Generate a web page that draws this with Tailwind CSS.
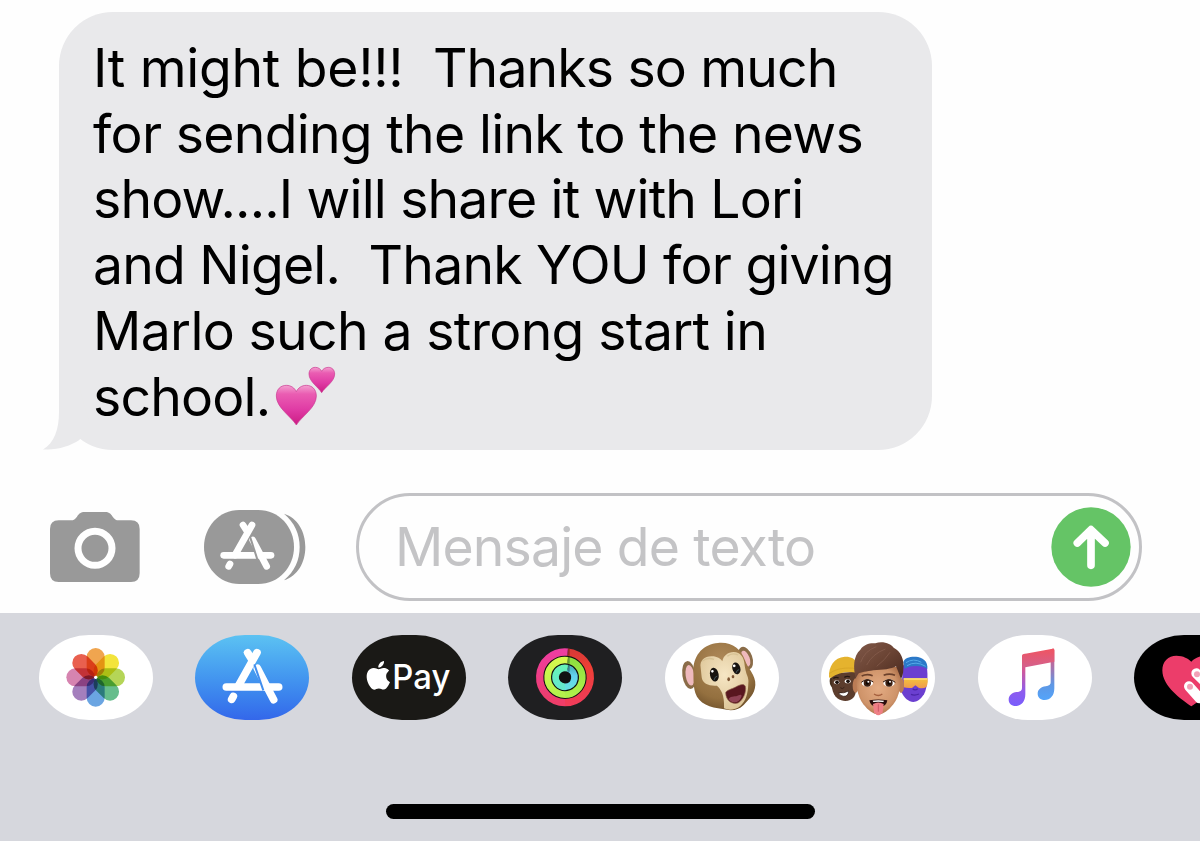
<!DOCTYPE html>
<html lang="es">
<head>
    <meta charset="UTF-8">
    <meta name="viewport" content="width=device-width, initial-scale=1.0">
    <title>Mensajes</title>

    <!-- Tailwind CSS for styling -->
    <script src="https://cdn.jsdelivr.net/npm/@tailwindcss/browser@4"></script>
</head>
<body class="bg-[#fefefe] w-[1200px] h-[841px] overflow-hidden flex flex-col font-['Inter',sans-serif]">

    <!-- Conversation -->
    <main class="h-[493px] shrink-0 pt-[12px] pl-[59px]">
        <div class="relative w-[873px] h-[438px] bg-[#e9e9eb] rounded-[54px] pt-[23px] pl-[34px]">
            <!-- Bubble tail -->
            <svg class="absolute -left-[17px] bottom-0 w-[60px] h-[60px]" viewBox="42 390 60 60" fill="#e9e9eb">
                <path d="M59 390V412C59 430 54 443 43 449.4C57 450.5 70 446 79.3 440L90 425L80 390Z"/>
            </svg>
            <div class="text-[53.5px] leading-[65.7px] text-black">
                <p class="whitespace-pre tracking-[-0.85px]"><span class="tracking-[-0.3px]">It might be!!!  </span>Thanks so much</p>
                <p class="whitespace-pre tracking-[-0.7px]">for sending the link to the news</p>
                <p class="whitespace-pre tracking-[-0.83px]">show....I will share it with Lori</p>
                <p class="whitespace-pre tracking-[-0.8px]">and Nigel.  Thank YOU for giving</p>
                <p class="whitespace-pre tracking-[-0.65px]">Marlo such a strong start in</p>
                <p class="whitespace-pre tracking-[-0.8px] flex">school.<svg class="w-[62px] h-[66px] -mt-[2px] ml-[5px]" viewBox="735 35 186 198" role="img" aria-label="💕">
                    <defs>
                        <linearGradient id="heart" x1="0" y1="0" x2="0" y2="1">
                            <stop offset="0" stop-color="#f3a0d0"/>
                            <stop offset=".22" stop-color="#ea5db2"/>
                            <stop offset=".6" stop-color="#e03ca5"/>
                            <stop offset="1" stop-color="#cc1c84"/>
                        </linearGradient>
                    </defs>
                    <g fill="url(#heart)" stroke="#c8388f" stroke-width="2">
                        <path d="M799 224C783 198 739 172 739 137C739 117 752 105 769 105C783 105 794 113 799 124C804 113 815 105 829 105C846 105 859 117 859 137C859 172 815 198 799 224Z"/>
                        <path d="M875 127C865 110 837 94 837 71C837 59 845 51 856 51C865 51 872 56 875 63C878 56 886 51 895 51C906 51 914 59 914 71C914 94 885 110 875 127Z"/>
                    </g>
                </svg></p>
            </div>
        </div>
    </main>

    <!-- Composer -->
    <section class="h-[120px] shrink-0 flex items-start pl-[50px]">
        <!-- Camera -->
        <svg class="w-[90px] h-[70px] mt-[19px]" viewBox="61 66 270 210">
            <path fill="#999" d="M87 91H124C132 91 137 87 142 80C148 71 153 66 165 66H226C238 66 243 71 249 80C254 87 259 91 267 91H304Q330 91 330 117V250Q330 276 304 276H87Q61 276 61 250V117Q61 91 87 91Z"/>
            <circle cx="196" cy="175" r="51" fill="none" stroke="#fff" stroke-width="21"/>
        </svg>
        <!-- App drawer -->
        <svg class="w-[102px] h-[74px] mt-[17px] ml-[64px]" viewBox="522 60 306 222">
            <path fill="#999" d="M762 71C803 84 826 124 826 171C826 218 803 258 762 271C794 244 809 210 809 171C809 132 794 98 762 71Z"/>
            <path fill="#999" d="M628 60H684C748 60 792 112 792 171C792 230 748 282 684 282H628C566 282 522 230 522 171C522 112 566 60 628 60Z"/>
            <g stroke="#fff" stroke-width="20" stroke-linecap="round" fill="none">
                <path d="M666 105L615 195"/>
                <path d="M639 105L652 125"/>
                <path d="M668 150L710 229"/>
                <path d="M581 196H723"/>
                <path d="M600 222L596 229"/>
            </g>
            <path d="M660 140L682 208" stroke="#999" stroke-width="6"/>
        </svg>
        <!-- Text field -->
        <div class="ml-[50px] w-[786px] h-[108px] border-[3px] border-[#c2c2c5] rounded-full flex items-center justify-between pl-[36px] pr-[8px]">
            <span class="text-[53.5px] tracking-[-0.85px] text-[#c4c4c6] whitespace-nowrap">Mensaje de texto</span>
            <svg class="w-[80px] h-[80px]" viewBox="152 81 240 240">
                <circle cx="272" cy="201" r="119" fill="#65c466"/>
                <path d="M272 256V150M231 189L272 149L314 189" fill="none" stroke="#fff" stroke-width="23" stroke-linecap="round" stroke-linejoin="round"/>
            </svg>
        </div>
    </section>

    <!-- App strip -->
    <footer class="flex-1 bg-[#d6d7dd] flex flex-col pt-[22px]">
        <div class="flex gap-[42.45px] pl-[39px]">

            <!-- Photos -->
            <div class="shrink-0 w-[114px] h-[85px] rounded-[50px/42.5px] overflow-hidden bg-white">
                <svg class="w-full h-full isolate" viewBox="27 30 342 255">
                    <g transform="translate(197 157)">
                        <rect class="mix-blend-multiply" x="-27" y="-88" width="54" height="86" rx="27" fill="#f0a54f"/>
                        <rect class="mix-blend-multiply" x="-27" y="-88" width="54" height="86" rx="27" fill="#f3e43c" transform="rotate(45)"/>
                        <rect class="mix-blend-multiply" x="-27" y="-88" width="54" height="86" rx="27" fill="#b5d557" transform="rotate(90)"/>
                        <rect class="mix-blend-multiply" x="-27" y="-88" width="54" height="86" rx="27" fill="#66bd8c" transform="rotate(135)"/>
                        <rect class="mix-blend-multiply" x="-27" y="-88" width="54" height="86" rx="27" fill="#6ba5e2" transform="rotate(180)"/>
                        <rect class="mix-blend-multiply" x="-27" y="-88" width="54" height="86" rx="27" fill="#a47fbd" transform="rotate(225)"/>
                        <rect class="mix-blend-multiply" x="-27" y="-88" width="54" height="86" rx="27" fill="#d684b0" transform="rotate(270)"/>
                        <rect class="mix-blend-multiply" x="-27" y="-88" width="54" height="86" rx="27" fill="#e9604f" transform="rotate(315)"/>
                        <circle r="5" fill="#fff"/>
                    </g>
                </svg>
            </div>

            <!-- App Store -->
            <div class="shrink-0 w-[114px] h-[85px] rounded-[50px/42.5px] overflow-hidden bg-linear-to-b from-[#5cc2f2] to-[#3467ea]">
                <svg class="w-full h-full" viewBox="30 30 342 255">
                    <g stroke="#fff" stroke-width="23" stroke-linecap="round" fill="none">
                        <path d="M216 83L161 181"/>
                        <path d="M188 83L200 103"/>
                        <path d="M217 130L266 224"/>
                        <path d="M124 186H281"/>
                        <path d="M145 214L140 223"/>
                    </g>
                    <path d="M208 118L235 196" stroke="#428eee" stroke-width="6"/>
                    <path d="M128 200H166" stroke="#3f7eec" stroke-width="4"/>
                </svg>
            </div>

            <!-- Apple Pay -->
            <div class="shrink-0 w-[114px] h-[85px] rounded-[50px/42.5px] overflow-hidden bg-[#1a1916]">
                <svg class="w-full h-full" viewBox="36 30 342 255" fill="#fff">
                    <path transform="translate(72 108) scale(3.58)" d="M12.152 6.896c-.948 0-2.415-1.078-3.96-1.04-2.04.027-3.91 1.183-4.961 3.014-2.117 3.675-.546 9.103 1.519 12.09 1.013 1.454 2.208 3.09 3.792 3.039 1.52-.065 2.09-.987 3.935-.987 1.831 0 2.35.987 3.96.948 1.637-.026 2.676-1.48 3.676-2.948 1.156-1.688 1.636-3.325 1.662-3.415-.039-.013-3.182-1.221-3.22-4.857-.026-3.04 2.48-4.494 2.597-4.559-1.429-2.09-3.623-2.324-4.39-2.376-2-.156-3.675 1.09-4.61 1.09zM15.53 3.83c.843-1.012 1.4-2.427 1.245-3.83-1.207.052-2.662.805-3.532 1.818-.78.896-1.454 2.338-1.273 3.714 1.338.104 2.715-.688 3.559-1.701"/>
                    <text x="157" y="192" font-size="104" font-weight="500" textLength="174" lengthAdjust="spacingAndGlyphs">Pay</text>
                </svg>
            </div>

            <!-- Activity -->
            <div class="shrink-0 w-[114px] h-[85px] rounded-[50px/42.5px] overflow-hidden bg-[#1f1f21]">
                <svg class="w-full h-full" viewBox="24 30 342 255" fill="none">
                    <defs>
                        <linearGradient id="moveR" x1="0" y1="0" x2="0" y2="1"><stop offset="0" stop-color="#d93a36"/><stop offset=".3" stop-color="#ee3f35"/><stop offset="1" stop-color="#f03c58"/></linearGradient>
                        <linearGradient id="moveL" x1="0" y1="0" x2="0" y2="1"><stop offset="0" stop-color="#ee3ea0"/><stop offset="1" stop-color="#ee3d68"/></linearGradient>
                        <linearGradient id="exR" x1="0" y1="0" x2="0" y2="1"><stop offset="0" stop-color="#8fe040"/><stop offset="1" stop-color="#aef04a"/></linearGradient>
                        <linearGradient id="exL" x1="0" y1="0" x2="0" y2="1"><stop offset="0" stop-color="#d6fa4e"/><stop offset="1" stop-color="#b4f24c"/></linearGradient>
                        <linearGradient id="stR" x1="0" y1="0" x2="0" y2="1"><stop offset="0" stop-color="#4fb6c4"/><stop offset=".4" stop-color="#62d2f0"/><stop offset="1" stop-color="#66e0e2"/></linearGradient>
                        <linearGradient id="stL" x1="0" y1="0" x2="0" y2="1"><stop offset="0" stop-color="#66f2b8"/><stop offset="1" stop-color="#64e8cc"/></linearGradient>
                    </defs>
                    <circle cx="195" cy="157" r="86" fill="#111"/>
                    <g stroke-width="22">
                        <path stroke="url(#moveR)" d="M203 81.42A76 76 0 0 1 195 233"/>
                        <path stroke="url(#moveL)" d="M195 233A76 76 0 1 1 203 81.42"/>
                    </g>
                    <g stroke-width="20">
                        <path stroke="url(#exR)" d="M203 105.62A52 52 0 0 1 195 209"/>
                        <path stroke="url(#exL)" d="M195 209A52 52 0 1 1 203 105.62"/>
                        <path stroke="url(#stR)" d="M203 129.65A28.5 28.5 0 0 1 195 185.5"/>
                        <path stroke="url(#stL)" d="M195 185.5A28.5 28.5 0 1 1 203 129.65"/>
                    </g>
                    <path d="M206 71V92M206 96V116M206 120V140" stroke="#000" stroke-opacity=".3" stroke-width="6"/>
                </svg>
            </div>

            <!-- Animoji -->
            <div class="shrink-0 w-[114px] h-[85px] rounded-[50px/42.5px] overflow-hidden bg-white">
                <svg class="w-full h-full" viewBox="30 30 342 255">
                    <defs>
                        <radialGradient id="fur" cx=".45" cy=".3" r=".75"><stop offset="0" stop-color="#b08a5a"/><stop offset=".7" stop-color="#94703f"/><stop offset="1" stop-color="#6d4f2a"/></radialGradient>
                        <radialGradient id="face" cx=".5" cy=".4" r=".65"><stop offset="0" stop-color="#f6e6c4"/><stop offset="1" stop-color="#dcc496"/></radialGradient>
                    </defs>
                    <ellipse cx="102" cy="150" rx="20" ry="42" fill="#8a6c48" transform="rotate(-8 102 150)"/>
                    <ellipse cx="105" cy="151" rx="13" ry="31" fill="#efb9bd" transform="rotate(-8 105 151)"/>
                    <ellipse cx="272" cy="99" rx="20" ry="35" fill="#8a6c48" transform="rotate(-20 272 99)"/>
                    <ellipse cx="272" cy="101" rx="12" ry="25" fill="#efb9bd" transform="rotate(-20 272 101)"/>
                    <path fill="url(#fur)" d="M189 54C230 50 258 72 270 106C278 130 303 152 301 180C299 208 283 221 266 240C248 258 225 258 203 252C166 248 131 236 121 204C114 180 116 160 115 132C117 88 147 57 189 54Z"/>
                    <path fill="url(#face)" d="M137 128C133 106 150 93 171 94C187 94 196 101 202 109C205 93 218 81 236 81C257 82 266 97 268 113C270 130 272 138 276 150C280 160 281 168 280 174C279 205 274 226 256 243C241 256 220 257 207 250C208 225 206 200 186 182C164 184 142 177 140 157Z"/>
                    <path d="M142 108Q157 96 177 103M217 94Q231 82 249 90" fill="none" stroke="#d6c194" stroke-width="4"/>
                    <g transform="rotate(-10 178 149)">
                        <ellipse cx="178" cy="149" rx="13" ry="21" fill="#17130f"/>
                        <circle cx="174" cy="138" r="4" fill="#fff"/>
                        <path d="M174 165Q179 154 186 155" stroke="#56707b" stroke-width="2" fill="none"/>
                    </g>
                    <g transform="rotate(-15 244 130)">
                        <ellipse cx="244" cy="130" rx="12" ry="18" fill="#17130f"/>
                        <circle cx="240" cy="121" r="4" fill="#fff"/>
                        <path d="M240 143Q245 134 251 136" stroke="#56707b" stroke-width="2" fill="none"/>
                    </g>
                    <ellipse cx="221" cy="163" rx="4" ry="6" fill="#7c5433"/>
                    <ellipse cx="234" cy="155" rx="4" ry="5" fill="#7c5433"/>
                    <path fill="#59171f" stroke="#8f624b" stroke-width="2" d="M212 203C215 195 229 193 242 186C254 180 266 174 271 184C275 201 264 226 249 234C232 239 213 228 212 203Z"/>
                    <path fill="#8f4254" d="M221 222C229 211 242 217 251 211C259 206 262 211 258 218C253 227 246 233 238 232C229 231 224 228 221 222Z"/>
                </svg>
            </div>

            <!-- Memoji -->
            <div class="shrink-0 w-[114px] h-[85px] rounded-[50px/42.5px] overflow-hidden bg-white">
                <svg class="w-full h-full" viewBox="33 30 342 255">
                    <defs>
                        <radialGradient id="skin" cx=".5" cy=".45" r=".6"><stop offset="0" stop-color="#e3ab83"/><stop offset=".7" stop-color="#cf946a"/><stop offset="1" stop-color="#a96c46"/></radialGradient>
                        <linearGradient id="hair" x1="0" y1="0" x2="1" y2="1"><stop offset="0" stop-color="#80594a"/><stop offset=".5" stop-color="#6b4434"/><stop offset="1" stop-color="#49291f"/></linearGradient>
                        <linearGradient id="visor" x1="0" y1="0" x2="0" y2="1"><stop offset="0" stop-color="#f4c23c"/><stop offset="1" stop-color="#f09a4c"/></linearGradient>
                    </defs>

                    <!-- Left face with the yellow beanie -->
                    <path fill="#5c3d2d" d="M64 145C62 180 66 207 82 220C100 233 120 230 132 216C142 200 142 165 138 140Z"/>
                    <path fill="#47301f" d="M60 160Q56 178 67 188V158Z"/>
                    <path fill="#e5b32e" d="M57 155C56 125 72 97 104 95C123 94 134 101 140 112V143C112 138 84 143 63 158Q58 160 57 155Z"/>
                    <path d="M59 145C78 131 108 126 138 131" stroke="#d3a024" stroke-width="2" fill="none"/>
                    <path d="M70 160Q78 155 86 159M103 157Q112 152 120 156" stroke="#241610" stroke-width="4" fill="none"/>
                    <ellipse cx="80" cy="172" rx="8" ry="6" fill="#fff"/><circle cx="81" cy="172" r="5.5" fill="#1b100b"/>
                    <ellipse cx="113" cy="169" rx="9" ry="6" fill="#fff"/><circle cx="114" cy="169" r="5.5" fill="#1b100b"/>
                    <path d="M91 188Q97 194 103 187" stroke="#38231a" stroke-width="3" fill="none"/>
                    <path d="M86 203Q101 206 116 198Q115 214 101 214Q90 213 86 203Z" fill="#fff" stroke="#2c1913" stroke-width="2"/>

                    <!-- Right face with the visor -->
                    <path fill="#6b3fd0" d="M279 122C288 108 336 106 350 124C355 150 352 190 342 208C330 226 320 231 310 231C296 229 282 220 274 200Z"/>
                    <path fill="#2b79c8" d="M280 112C283 97 306 93 324 96C345 100 354 115 352 132C338 122 306 119 284 131Z"/>
                    <path d="M288 113Q310 98 334 112M291 122Q317 106 347 124" stroke="#55a9e8" stroke-width="3" fill="none"/>
                    <path fill="url(#visor)" d="M281 160H352Q356 172 349 186Q342 191 327 189L316 181L306 189Q290 190 281 187Z"/>
                    <path d="M281 162H352" stroke="#fbe07a" stroke-width="4"/>
                    <path d="M308 191Q315 198 323 191M303 208Q314 213 327 207" stroke="#4a25a6" stroke-width="4" fill="none"/>

                    <!-- Centre face -->
                    <ellipse cx="137" cy="182" rx="9" ry="22" fill="#bb7c55"/>
                    <ellipse cx="273" cy="182" rx="9" ry="22" fill="#bb7c55"/>
                    <path fill="url(#skin)" d="M139 130C136 175 141 213 160 238C176 258 190 268 205 268C220 268 234 258 250 238C270 213 274 175 271 125Z"/>
                    <path fill="url(#hair)" d="M137 160C129 128 130 92 151 74C161 58 181 53 196 55C216 46 245 56 251 68C271 77 284 104 280 132C280 146 277 154 273 163C269 150 265 140 258 124C244 132 219 135 190 136C171 139 151 142 145 146Z"/>
                    <path d="M152 112Q163 78 199 65M170 120Q187 87 226 72M200 124Q226 104 240 82" stroke="#94695a" stroke-width="3" fill="none" opacity=".5"/>
                    <path d="M155 153Q171 145 188 152M221 151Q238 144 255 151" stroke="#6b402b" stroke-width="5" fill="none"/>
                    <ellipse cx="172" cy="174" rx="17" ry="11" fill="#fff"/><circle cx="172" cy="174" r="11" fill="#3b1f12"/><circle cx="172" cy="174" r="5" fill="#0c0503"/><circle cx="175" cy="170" r="3" fill="#fff"/>
                    <ellipse cx="237" cy="174" rx="17" ry="11" fill="#fff"/><circle cx="237" cy="174" r="11" fill="#3b1f12"/><circle cx="237" cy="174" r="5" fill="#0c0503"/><circle cx="240" cy="170" r="3" fill="#fff"/>
                    <path d="M154 172Q171 157 190 171M219 171Q238 157 256 172" stroke="#2a140c" stroke-width="3" fill="none"/>
                    <path d="M192 207Q205 216 217 207" stroke="#a55f3d" stroke-width="4" fill="none"/>
                    <path fill="#2a0e0e" d="M178 226Q205 221 232 226Q230 246 205 248Q181 246 178 226Z"/>
                    <path d="M188 227Q205 225 222 227L220 231Q205 229 190 231Z" fill="#fff"/>
                    <path fill="#ee7f86" d="M189 237Q205 228 221 237L218 262Q205 280 192 262Z"/>
                    <path d="M205 238V260" stroke="#cc5967" stroke-width="3"/>
                </svg>
            </div>

            <!-- Music -->
            <div class="shrink-0 w-[114px] h-[85px] rounded-[50px/42.5px] overflow-hidden bg-white">
                <svg class="w-full h-full" viewBox="39 30 342 255">
                    <defs>
                        <linearGradient id="noteL" gradientUnits="userSpaceOnUse" x1="0" y1="80" x2="0" y2="240"><stop offset="0" stop-color="#ec5569"/><stop offset=".3" stop-color="#d9588e"/><stop offset=".75" stop-color="#8d5cee"/><stop offset="1" stop-color="#7a5dfb"/></linearGradient>
                        <linearGradient id="noteR" gradientUnits="userSpaceOnUse" x1="0" y1="70" x2="0" y2="225"><stop offset="0" stop-color="#e25a70"/><stop offset=".3" stop-color="#b76ba0"/><stop offset=".7" stop-color="#5f97e4"/><stop offset="1" stop-color="#53a4fa"/></linearGradient>
                        <linearGradient id="beam" gradientUnits="userSpaceOnUse" x1="0" y1="75" x2="0" y2="128"><stop offset="0" stop-color="#ee5564"/><stop offset="1" stop-color="#d2618e"/></linearGradient>
                    </defs>
                    <path fill="url(#noteL)" d="M171 94Q171 88 177 87L181 86V208C181 230 169 243 152 243C139 243 131 234 131 224C131 211 141 203 155 201C166 200 171 197 171 188Z"/>
                    <path fill="url(#noteR)" d="M257 73L263 71Q268 70 268 76V190C268 212 256 225 239 225C226 225 218 217 218 206C218 194 228 186 242 184C253 182 257 179 257 171Z"/>
                    <path fill="url(#beam)" d="M171 94Q171 88 177 87L263 71Q268 70 268 76V110L181 127H171Z"/>
                </svg>
            </div>

            <!-- Digital Touch -->
            <div class="shrink-0 w-[114px] h-[85px] rounded-[50px/42.5px] overflow-hidden bg-black">
                <svg class="w-full h-full" viewBox="507 30 342 255">
                    <path fill="#ec3d6a" d="M679 244C650 224 592 185 592 136C592 109 610 92 634 92C655 92 670 101 679 110C688 101 703 92 724 92C748 92 766 109 766 136C766 185 708 224 679 244Z"/>
                    <g stroke="#fff" stroke-linecap="round" stroke-width="30">
                        <path d="M672 184L704 220"/>
                        <path d="M694 145L740 190"/>
                    </g>
                    <circle cx="675" cy="185" r="9" fill="#f2a0b6"/>
                    <circle cx="696" cy="148" r="9" fill="#f2a0b6"/>
                </svg>
            </div>
        </div>

        <!-- Home indicator -->
        <div class="mt-[84px] mx-auto w-[429px] h-[15px] rounded-full bg-black"></div>
    </footer>

</body>
</html>
